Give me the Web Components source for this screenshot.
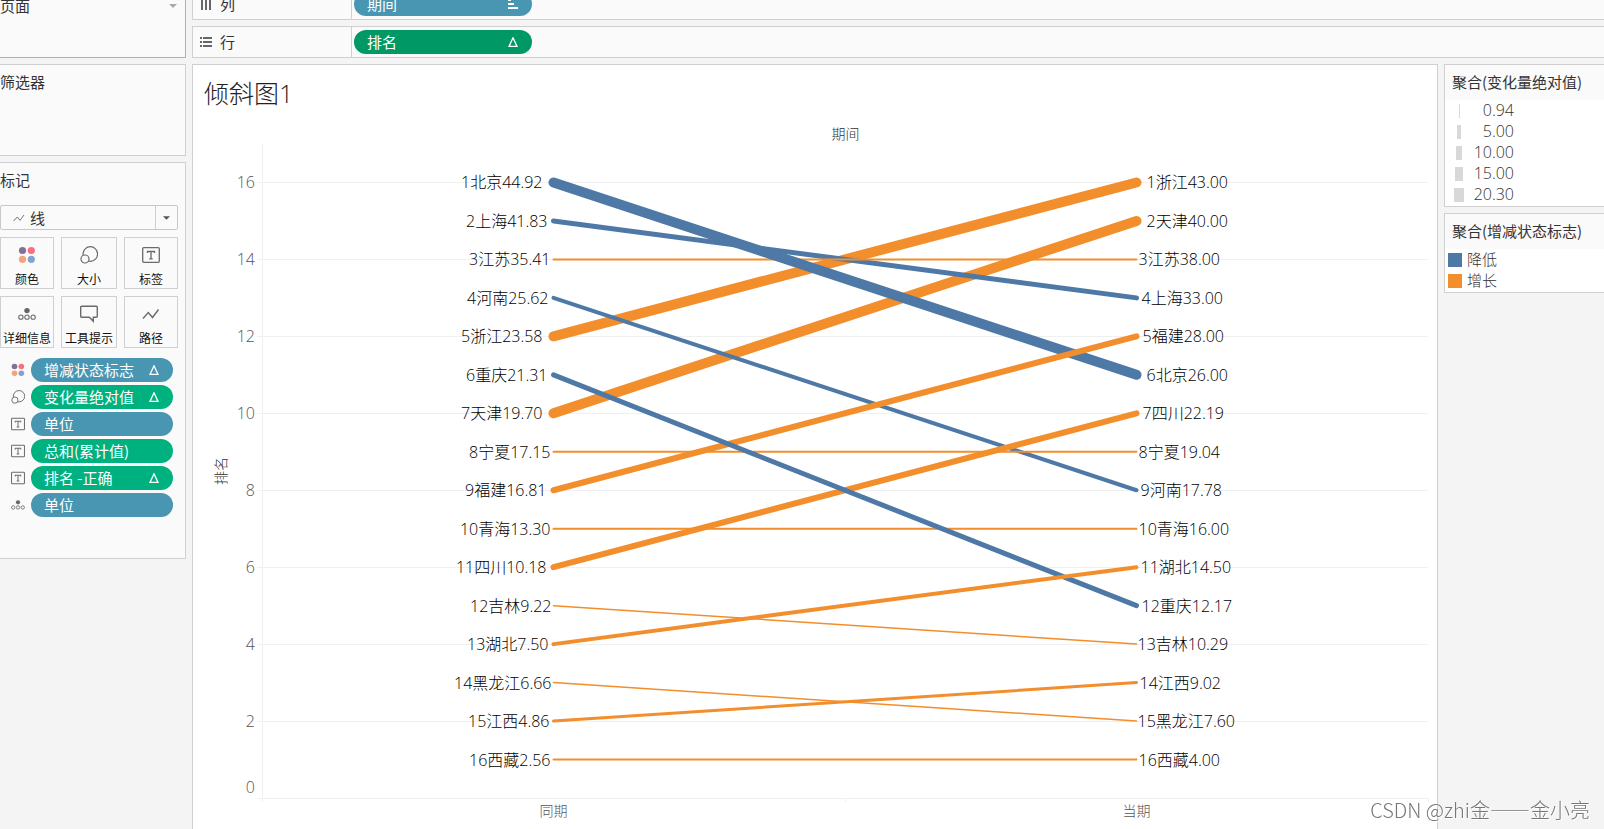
<!DOCTYPE html>
<html lang="zh-CN">
<head>
<meta charset="utf-8">
<title>倾斜图1</title>
<style>
html, body { margin: 0; height: 100%; overflow: hidden; background: #f4f4f4; }
body { font: 15px/20px "Noto Sans CJK SC", sans-serif; color: #333; }
</style>
</head>
<body>
<tableau-sheet></tableau-sheet>
<script>
const define = (name, html, init) => {
  const tpl = document.createElement('template');
  tpl.innerHTML = html;
  customElements.define(name, class extends HTMLElement {
    constructor() {
      super();
      this.attachShadow({ mode: 'open' }).append(tpl.content.cloneNode(true));
    }
    connectedCallback() { if (init) init(this, this.shadowRoot); }
  });
};

const G = '#6b6b6b';
const ICONS = {
  columns: ['0 0 12 12', '<path d="M1 0h2v12H1zM5 0h2v12H5zM9 0h2v12H9z" fill="#666"/>'],
  rows: ['0 0 12 12', '<path d="M0 1h2v2H0zM3 1h9v2H3zM0 5h2v2H0zM3 5h9v2H3zM0 9h2v2H0zM3 9h9v2H3z" fill="#666"/>'],
  sort: ['0 0 10 12', '<path d="M0 1h3v2H0zM0 5h6v2H0zM0 9h10v2H0z" fill="#fff"/>'],
  delta: ['0 0 10 10', '<path d="M5 .8 9 9.4H1z" fill="none" stroke="#fff" stroke-width="1.3"/>'],
  color: ['0 0 18 18', '<circle cx="4.5" cy="4.5" r="3.6" fill="#856f98"/><circle cx="13.3" cy="4.5" r="3.6" fill="#fa6e80"/><circle cx="4.5" cy="13.3" r="3.6" fill="#f2a57c"/><circle cx="13.3" cy="13.3" r="3.6" fill="#7fa4ce"/>'],
  size: ['0 0 18 18', `<circle cx="10.3" cy="8" r="7.3" fill="none" stroke="${G}" stroke-width="1.2"/><circle cx="5" cy="13" r="4" fill="#fafafa" stroke="${G}" stroke-width="1.2"/>`],
  label: ['0 0 18 16', `<rect x=".7" y=".7" width="16.6" height="14.6" rx="1" fill="none" stroke="${G}" stroke-width="1.3"/><path d="M5.5 6V4.5h7V6M9 4.5v7.3M7.3 11.8h3.4" fill="none" stroke="${G}" stroke-width="1.3"/>`],
  detail: ['0 0 20 14', `<circle cx="10" cy="3.2" r="3" fill="#666"/><g fill="none" stroke="${G}" stroke-width="1.2"><circle cx="3.2" cy="10.5" r="2.4"/><circle cx="10" cy="10.5" r="2.4"/><circle cx="16.8" cy="10.5" r="2.4"/></g>`],
  tooltip: ['0 0 18 17', `<path d="M1.7.8h14.6q1 0 1 1v9q0 1-1 1H13.300v4l-4-4H1.700q-1 0-1-1v-9q0-1 1-1z" fill="none" stroke="${G}" stroke-width="1.4"/>`],
  path: ['0 0 18 12', `<path d="M1 10.500 6.300 4.500 10.500 9.500 16.500 1.500" fill="none" stroke="${G}" stroke-width="1.4"/>`],
  caret: ['0 0 8 4', '<path d="M0 0h8L4 4z" fill="currentColor"/>']
};
define('ui-icon', `<style>:host{display:block;flex:none}svg{display:block;width:100%;height:100%}</style>`, (el, root) => {
  const [box, art] = ICONS[el.getAttribute('name')];
  root.innerHTML += `<svg viewBox="${box}" aria-hidden="true">${art}</svg>`;
});

define('field-pill', `<style>
:host{display:block}
button{display:flex;align-items:center;justify-content:space-between;box-sizing:border-box;width:100%;height:24px;border:0;border-radius:12px;padding:0 14px 0 13px;background:var(--pill,#4996b2);color:#fff;font:inherit;text-align:left}
ui-icon{width:10px;height:10px}
ui-icon[name=sort]{height:12px}
</style><button type="button"><span><slot></slot></span></button>`, (el, root) => {
  const name = el.getAttribute('mark');
  if (name) root.querySelector('button').insertAdjacentHTML('beforeend', `<ui-icon name="${name}"></ui-icon>`);
});

define('field-shelf', `<style>
:host{display:flex;box-sizing:border-box;height:32px;border:1px solid #d0d0d0;border-right:0;background:#fafafa}
.name{display:flex;align-items:center;gap:8px;box-sizing:border-box;width:159px;padding-left:7px;border-right:1px solid #d0d0d0}
.name ui-icon{width:12px;height:12px}
.fields{padding:3px 2px;width:178px}
</style><div class="name"><slot name="icon"></slot><slot name="name"></slot></div><div class="fields"><slot></slot></div>`);

define('side-card', `<style>
:host{display:block;box-sizing:border-box;border:1px solid #d0d0d0;background:#fafafa;padding:7px 7px 0 8px}
header{display:flex;justify-content:space-between;align-items:center}
</style><header><slot name="title"></slot><slot name="menu"></slot></header><slot></slot>`);

define('mark-button', `<style>
:host{display:block}
button{display:flex;flex-direction:column;align-items:center;box-sizing:border-box;width:100%;height:52px;padding:7px 0 0;border:1px solid #d0d0d0;background:#fafafa;color:#111;font:inherit;font-size:12px;line-height:16px;white-space:nowrap}
.i{display:grid;place-items:center;height:20px;margin-bottom:6px}
ui-icon{width:18px;height:18px}
</style><button type="button"><span class="i"></span><slot></slot></button>`, (el, root) => {
  root.querySelector('.i').innerHTML = `<ui-icon name="${el.getAttribute('icon')}"></ui-icon>`;
});

define('marks-panel', `<style>
:host{display:block}
.type{position:relative;display:grid;margin-top:15px}
.type>*{grid-area:1/1}
select{appearance:none;height:25px;width:100%;box-sizing:border-box;border:1px solid #c8c8c8;border-radius:2px;background:#fafafa;color:#333;font:inherit;padding:0 24px 0 29px}
.lead{place-self:center start;margin-left:13px;width:12px;height:8px}
.drop{justify-self:end;display:grid;place-items:center;width:21px;border-left:1px solid #d0d0d0;margin:1px;color:#555}
.drop ui-icon{width:7px;height:4px}
.lead,.drop{pointer-events:none}
.grid{display:grid;grid-template-columns:54fr 56fr 54fr;gap:7px;margin-top:7px}
ul{list-style:none;margin:10px 5px 0 8px;padding:0;display:grid;gap:3px}
li{display:grid;grid-template-columns:20px 1fr;align-items:center;gap:3px}
li>ui-icon{width:14px;height:14px;justify-self:center}
.g{--pill:#00b180}
</style>
<div class="type"><select aria-label="标记类型"><option>线</option></select><ui-icon class="lead" name="path"></ui-icon><span class="drop"><ui-icon name="caret"></ui-icon></span></div>
<div class="grid">
<mark-button icon="color">颜色</mark-button><mark-button icon="size">大小</mark-button><mark-button icon="label">标签</mark-button>
<mark-button icon="detail">详细信息</mark-button><mark-button icon="tooltip">工具提示</mark-button><mark-button icon="path">路径</mark-button>
</div>
<ul>
<li><ui-icon name="color"></ui-icon><field-pill mark="delta">增减状态标志</field-pill></li>
<li><ui-icon name="size"></ui-icon><field-pill class="g" mark="delta">变化量绝对值</field-pill></li>
<li><ui-icon name="label"></ui-icon><field-pill>单位</field-pill></li>
<li><ui-icon name="label"></ui-icon><field-pill class="g">总和(累计值)</field-pill></li>
<li><ui-icon name="label"></ui-icon><field-pill class="g" mark="delta">排名 -正确</field-pill></li>
<li><ui-icon name="detail"></ui-icon><field-pill>单位</field-pill></li>
</ul>`);

define('legend-card', `<style>
:host{display:block;border:1px solid #d0d0d0;border-right:0;background:#fff}
h2{box-sizing:border-box;margin:0;height:35px;padding:7px 0 0 7px;background:#fafafa;font:inherit;white-space:nowrap}
.rows{padding-bottom:1px}
</style><h2><slot name="title"></slot></h2><div class="rows"><slot></slot></div>`);

define('legend-row', `<style>
:host{display:flex;align-items:center;height:21px;font:300 15px/21px "Open Sans","Noto Sans CJK SC",sans-serif;color:#333}
.box{display:flex;justify-content:center;width:14px;margin:0 5px 0 3px}
i{display:block;height:14px;background:#d8d8d8}
:host([size]){font-size:16px}
:host([size]) .box{margin:0 6px 0 7px}
:host([size]) span{width:42px;text-align:right}
</style><div class="box"><i></i></div><span><slot></slot></span>`, (el, root) => {
  const i = root.querySelector('i');
  i.style.width = (el.getAttribute('size') || 14) + 'px';
  if (el.hasAttribute('color')) i.style.background = el.getAttribute('color');
});

/* name, rank and value before, rank and value now, stroke width */
const DATA = [
  ['浙江', 5, '23.58', 1, '43.00', 10],
  ['天津', 7, '19.70', 2, '40.00', 10],
  ['上海', 2, '41.83', 4, '33.00', 5],
  ['江苏', 3, '35.41', 3, '38.00', 2],
  ['北京', 1, '44.92', 6, '26.00', 10],
  ['河南', 4, '25.62', 9, '17.78', 4],
  ['福建', 9, '16.81', 5, '28.00', 6],
  ['四川', 11, '10.18', 7, '22.19', 6],
  ['宁夏', 8, '17.15', 8, '19.04', 2],
  ['青海', 10, '13.30', 10, '16.00', 2],
  ['重庆', 6, '21.31', 12, '12.17', 5],
  ['吉林', 12, '9.22', 13, '10.29', 1],
  ['湖北', 13, '7.50', 11, '14.50', 4],
  ['黑龙江', 14, '6.66', 15, '7.60', 1],
  ['江西', 15, '4.86', 14, '9.02', 3],
  ['西藏', 16, '2.56', 16, '4.00', 2]
];
define('slope-chart', `<style>
:host{display:grid;grid-template-columns:59px 1fr;grid-template-rows:654px 30px;font-family:"Open Sans","Noto Sans CJK SC",sans-serif;font-weight:300;margin-right:9px}
svg{display:block;width:100%;height:100%;overflow:visible}
.y{display:flex;align-items:center;justify-content:center;writing-mode:vertical-rl;text-orientation:sideways;transform:rotate(180deg);width:20px;color:#333;font-size:14px}
.x{grid-column:2;display:flex;justify-content:space-around;color:#555;font-size:14px;line-height:26px}
text{font-size:16px;fill:#000}
.tick{fill:#555;text-anchor:end}
.grid{stroke:#f0f0f0;shape-rendering:crispEdges}
.end{text-anchor:end}
.left{padding-left:8px;display:flex}
</style>
<div class="left"><div class="y">排名</div></div>
<svg role="img" aria-label="倾斜图1"></svg>
<div class="x"><span>同期</span><span>当期</span></div>`, (el, root) => {
  const y = v => (17 - v) / 17 * 100 + '%';
  let s = '';
  for (let v = 0; v <= 16; v += 2) {
    s += `<line class="grid" x1="-5" x2="100%" y1="${y(v)}" y2="${y(v)}"/>`;
    s += `<text class="tick" x="-7" y="${y(v)}" dy="${v ? 6 : -5}">${v}</text>`;
  }
  s += '<line class="grid" x1="0" x2="0" y1="0" y2="100%"/>';
  for (const x of ['0', '50%', '100%'])
    s += `<svg x="${x}" y="100%" overflow="visible"><line class="grid" y2="4"/></svg>`;
  for (const [, a, , b, , w] of DATA) {
    const color = b > a && w !== 1 ? '#4e79a7' : '#f28e2b';
    s += `<line x1="25%" x2="75%" y1="${y(17 - a)}" y2="${y(17 - b)}" stroke="${color}" stroke-width="${w === 1 ? 1.5 : w}" stroke-linecap="round"/>`;
  }
  for (const [n, a, va, b, vb, w] of DATA) {
    s += `<text class="end" x="25%" y="${y(17 - a)}" dx="${-w - 1}" dy="6">${a}${n}${va}</text>`;
    s += `<text x="75%" y="${y(17 - b)}" dx="${w}" dy="6">${b}${n}${vb}</text>`;
  }
  root.querySelector('svg').innerHTML = s;
});

define('tableau-sheet', `<style>
:host{display:grid;grid-template-columns:195px minmax(0,1fr);gap:6px;margin:-12px 0 0 -9px}
aside{display:grid;align-content:start;gap:6px}
.pages{height:70px;border-color:#b0b0b0}
.filters{height:92px}
.marks{height:397px}
.pages ui-icon{width:8px;height:4px;color:#aaa;margin-right:1px}
main{display:grid;gap:6px;align-content:start}
.work{display:grid;grid-template-columns:minmax(0,1fr) 160px;gap:6px}
.viz{background:#fff;border:1px solid #d0d0d0;box-sizing:border-box;min-height:780px}
h1{margin:0;padding:9px 11px 0;height:31px;font:300 25px/38px "Open Sans","Noto Sans CJK SC",sans-serif;color:#222}
.cap{text-align:center;margin:18px 9px 1px 70px;font-size:14px;font-weight:300;line-height:20px}
.legends{display:grid;align-content:start;gap:6px}
.green{--pill:#009966}
.wm{position:fixed;right:14px;bottom:8px;font:300 20px/22px "Noto Sans CJK SC",sans-serif;color:#777;text-shadow:1px 1px 0 #fff}
[slot=icon]{width:12px;height:12px}
slope-chart{margin-left:10px}
</style>
<aside>
<side-card class="pages"><span slot="title">页面</span><ui-icon slot="menu" name="caret"></ui-icon></side-card>
<side-card class="filters"><span slot="title">筛选器</span></side-card>
<side-card class="marks"><span slot="title">标记</span><marks-panel></marks-panel></side-card>
</aside>
<main>
<field-shelf><ui-icon slot="icon" name="columns"></ui-icon><span slot="name">列</span><field-pill mark="sort">期间</field-pill></field-shelf>
<field-shelf><ui-icon slot="icon" name="rows"></ui-icon><span slot="name">行</span><field-pill class="green" mark="delta">排名</field-pill></field-shelf>
<div class="work">
<section class="viz"><h1>倾斜图1</h1><div class="cap">期间</div><slope-chart></slope-chart></section>
<div class="legends">
<legend-card><span slot="title">聚合(变化量绝对值)</span>
<legend-row size="1">0.94</legend-row><legend-row size="4">5.00</legend-row><legend-row size="6">10.00</legend-row><legend-row size="8">15.00</legend-row><legend-row size="10">20.30</legend-row></legend-card>
<legend-card><span slot="title">聚合(增减状态标志)</span>
<legend-row color="#4e79a7">降低</legend-row><legend-row color="#f28e2b">增长</legend-row></legend-card>
</div>
</div>
</main>
<div class="wm">CSDN @zhi金——金小亮</div>`);
</script>
</body>
</html>
